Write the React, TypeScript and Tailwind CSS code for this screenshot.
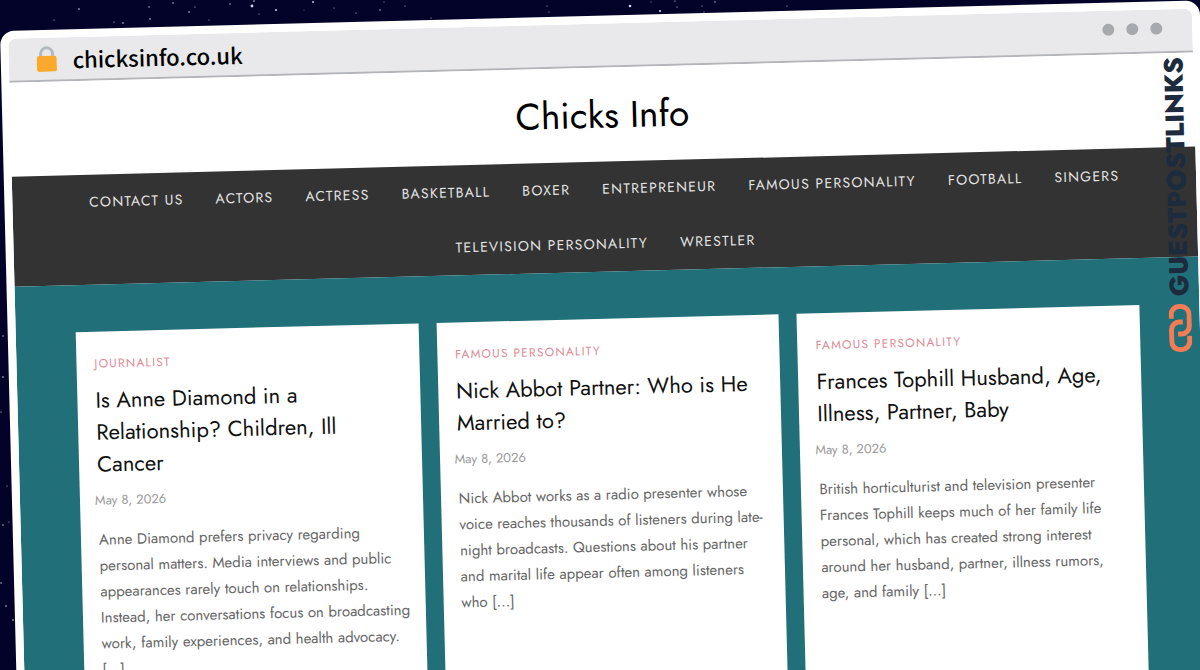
import React from 'react';

interface Post {
  category: string;
  title: string;
  date: string;
  excerpt: string;
}

const navItems = [
  'Contact Us',
  'Actors',
  'Actress',
  'Basketball',
  'Boxer',
  'Entrepreneur',
  'Famous Personality',
  'Football',
  'Singers',
  'Television Personality',
  'Wrestler',
];

const posts: Post[] = [
  {
    category: 'Journalist',
    title: 'Is Anne Diamond in a Relationship? Children, Ill Cancer',
    date: 'May 8, 2026',
    excerpt:
      'Anne Diamond prefers privacy regarding personal matters. Media interviews and public appearances rarely touch on relationships. Instead, her conversations focus on broadcasting work, family experiences, and health advocacy. […]',
  },
  {
    category: 'Famous Personality',
    title: 'Nick Abbot Partner: Who is He Married to?',
    date: 'May 8, 2026',
    excerpt:
      'Nick Abbot works as a radio presenter whose voice reaches thousands of listeners during late-night broadcasts. Questions about his partner and marital life appear often among listeners who […]',
  },
  {
    category: 'Famous Personality',
    title: 'Frances Tophill Husband, Age, Illness, Partner, Baby',
    date: 'May 8, 2026',
    excerpt:
      'British horticulturist and television presenter Frances Tophill keeps much of her family life personal, which has created strong interest around her husband, partner, illness rumors, age, and family […]',
  },
];

// x, y, radius
const stars = [
  [79, 9, 0.8], [54, 20, 0.6], [114, 22, 0.6], [123, 23, 0.8], [149, 7, 0.7], [150, 19, 0.8],
  [173, 3, 0.7], [189, 12, 0.8], [195, 7, 0.6], [209, 20, 0.5], [230, 4, 0.7], [252, 6, 1.4],
  [254, 1, 0.8], [259, 14, 0.5], [276, 10, 1], [304, 10, 0.4], [313, 2, 0.9], [334, 8, 0.5],
  [356, 13, 0.6], [380, 10, 0.7], [384, 2, 0.5], [405, 6, 0.6], [431, 18, 0.6], [547, 6, 0.5],
  [549, 12, 0.5], [630, 6, 1.3], [651, 2, 0.5], [660, 11, 1.1], [675, 1, 0.6], [677, 7, 0.6],
  [702, 6, 0.5], [704, 12, 0.6], [715, 2, 0.7], [787, 6, 0.6], [3, 336, 0.7], [3, 377, 0.8],
  [1, 412, 0.6], [7, 486, 0.6], [3, 525, 0.7], [9, 522, 0.5], [1, 583, 0.7], [6, 606, 0.8],
  [13, 620, 0.8],
];

function Toolbar() {
  return (
    <div className="flex h-11 items-center border-b-2 border-[#b4b5b9] bg-[#e9e9eb] pr-[30px] pl-7">
      <svg className="h-[26px] w-5" viewBox="0 0 20 26" aria-hidden="true">
        <path d="M4 12V8a6 6 0 0 1 12 0V12" fill="none" stroke="#b3bac0" strokeWidth="3" />
        <rect x="0" y="10" width="20" height="16" rx="2.5" fill="#fba92c" />
      </svg>
      <span className="ml-4 font-['Noto_Sans_CJK_SC','Noto_Sans',sans-serif] text-[22px] leading-none font-medium text-black">
        chicksinfo.co.uk
      </span>
      <div className="ml-auto flex gap-3 pb-1">
        <span className="size-3 rounded-full bg-[#a8a9ac]" />
        <span className="size-3 rounded-full bg-[#a8a9ac]" />
        <span className="size-3 rounded-full bg-[#a8a9ac]" />
      </div>
    </div>
  );
}

function PostCard({ post }: { post: Post }) {
  return (
    <article className="min-h-[480px] flex-1 bg-white pt-[22px] pr-3 pl-[15px]">
      <a href="#" className="block px-[3px] text-[12px] leading-5 tracking-widest text-[#dd8a95] uppercase">
        {post.category}
      </a>
      <h2 className="mt-[10px] px-[3px] text-[22px] leading-8 text-[#111]">
        <a href="#">{post.title}</a>
      </h2>
      <time className="mt-[11px] block text-[13px] leading-5 text-[#999]">{post.date}</time>
      <p className="mt-4 pl-[3px] text-[15px] leading-[26px] text-[#666]">{post.excerpt}</p>
    </article>
  );
}

function Watermark() {
  return (
    <div className="absolute top-12 right-[6px] flex w-7 flex-col items-center gap-2">
      <span className="rotate-180 text-[26px] leading-7 font-extrabold text-[#1c2b3d] [writing-mode:vertical-rl]">
        GUESTPOSTLINKS
      </span>
      <svg className="h-12 w-[23px]" viewBox="0 0 23 48" fill="none" stroke="#f47c54" strokeWidth="5" aria-hidden="true">
        <path d="M2.500 14.500V10.500a8 8 0 0 1 8-8h2a8 8 0 0 1 8 8V22a8 8 0 0 1-8 8H9" />
        <path d="M20.500 32V37.500a8 8 0 0 1-8 8h-2a8 8 0 0 1-8-8V26a8 8 0 0 1 8-8H14" />
      </svg>
    </div>
  );
}

export default function App() {
  return (
    <div className="relative h-screen overflow-hidden bg-[#03032a] font-['Jost','Lato',sans-serif]">
      <svg className="absolute inset-0 size-full" fill="#cfd3ee" aria-hidden="true">
        {stars.map(([x, y, r]) => (
          <circle key={`${x}-${y}`} cx={x} cy={y} r={r} />
        ))}
      </svg>
      <div className="relative mt-[31px] origin-top-left rotate-[-1.46deg] rounded-[14px] bg-white p-2">
        <div className="relative overflow-hidden rounded-t-lg">
          <Toolbar />
          <header className="flex h-[94px] items-center justify-center bg-white">
            <h1 className="text-[37px] leading-none text-black">
              <a href="#">Chicks Info</a>
            </h1>
          </header>
          <nav className="bg-[#333] px-10">
            <ul className="flex flex-wrap justify-center">
              {navItems.map(item => (
                <li key={item}>
                  <a
                    href="#"
                    className="block px-4 text-[14px] leading-[55px] tracking-[0.09em] text-[#e4e4e4] uppercase"
                  >
                    {item}
                  </a>
                </li>
              ))}
            </ul>
          </nav>
          <main className="flex gap-[18px] bg-[#216f79] px-[60px] pt-[47px]">
            {posts.map(post => (
              <PostCard key={post.title} post={post} />
            ))}
          </main>
          <Watermark />
        </div>
      </div>
    </div>
  );
}
